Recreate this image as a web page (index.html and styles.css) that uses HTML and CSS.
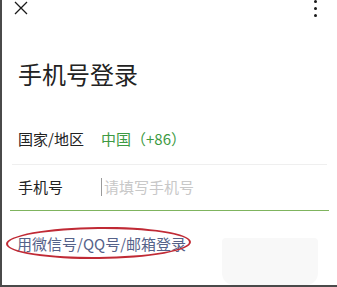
FILE: index.html
```html
<!DOCTYPE html>
<html lang="zh">
<head>
<meta charset="utf-8">
<link rel="stylesheet" href="styles.css">
</head>
<body>
<div class="frame">
  <div class="topbar">
    <svg class="close" width="14" height="14" viewBox="0 0 14 14"><path d="M1 1L13 13M13 1L1 13" stroke="#1a1a1a" stroke-width="1.3" fill="none"/></svg>
    <svg class="more" width="5" height="18" viewBox="0 0 5 18"><circle cx="2.5" cy="1.6" r="1.5" fill="#1a1a1a"/><circle cx="2.5" cy="8.6" r="1.5" fill="#1a1a1a"/><circle cx="2.5" cy="15.6" r="1.5" fill="#1a1a1a"/></svg>
  </div>
  <h1 class="title">手机号登录</h1>
  <div class="form">
    <div class="row row-region">
      <span class="label">国家/地区</span>
      <span class="value">中国（+86）</span>
    </div>
    <div class="row row-phone">
      <span class="label">手机号</span>
      <span class="input"><span class="caret"></span><span class="placeholder">请填写手机号</span></span>
    </div>
    <div class="links">
      <span class="alt-link">用微信号/QQ号/邮箱登录</span>
    </div>
  </div>
  <div class="smudge"></div>
</div>
</body>
</html>
```
FILE: styles.css
```css
html, body {
  margin: 0;
  padding: 0;
  background: #fff;
}
body {
  font-family: "Noto Sans CJK SC", "Noto Sans", sans-serif;
  color: #222;
}
.frame {
  position: relative;
  width: 337px;
  height: 287px;
  box-sizing: border-box;
  border-left: 2px solid #4a4a4a;
  border-bottom: 2px solid #4a4a4a;
  overflow: hidden;
}
.topbar {
  height: 18px;
  display: flex;
  justify-content: space-between;
  align-items: flex-start;
  padding: 0 19px 0 12px;
}
.close {
  display: block;
  margin-top: 1px;
}
.more {
  display: block;
  margin-top: 0;
}
.title {
  margin: 40px 0 0 16px;
  font-size: 24px;
  line-height: 31px;
  font-weight: normal;
  color: #222;
  letter-spacing: 0;
}
.form {
  margin: 28px 8px 0 8px;
}
.row {
  display: flex;
  align-items: center;
  padding-left: 8px;
  font-size: 15px;
  line-height: 44px;
}
.row-region {
  padding-bottom: 3px;
  border-bottom: 1px solid #efefef;
  margin: 0 2px;
  padding-left: 6px;
}
.row-phone {
  padding-bottom: 1px;
  border-bottom: 1px solid #7fb45e;
}
.label {
  width: 83px;
  flex: none;
}
.value {
  color: #3d9a43;
}
.input {
  display: flex;
  align-items: center;
}
.caret {
  width: 1px;
  height: 18px;
  background: #9a9a9a;
  margin-right: 2px;
}
.placeholder {
  color: #c8c8c8;
}
.links {
  margin-top: 20px;
  padding-left: 7px;
}
.alt-link {
  position: relative;
  display: inline-block;
  font-size: 15px;
  line-height: 22px;
  color: #556289;
}
.alt-link::after {
  content: "";
  position: absolute;
  left: -11px;
  right: -5px;
  top: -6px;
  bottom: -4px;
  border: 2.5px solid #c02a35;
  border-radius: 50%;
  transform: rotate(-0.6deg);
}
.smudge {
  position: absolute;
  left: 220px;
  top: 238px;
  width: 96px;
  height: 47px;
  background: #f8f8f8;
  border-radius: 4px 4px 12px 12px;
}
```
